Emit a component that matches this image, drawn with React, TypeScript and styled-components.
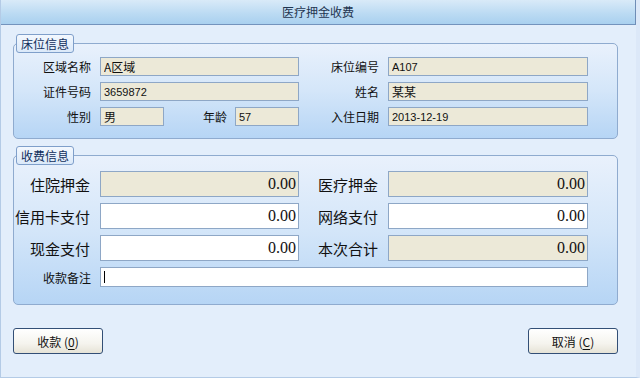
import styled, { createGlobalStyle } from "styled-components";

const GlobalStyle = createGlobalStyle`
  html, body {
    margin: 0;
    padding: 0;
    background: #e3eefb;
  }
  * {
    box-sizing: border-box;
  }
`;

const cjk = `"Noto Sans CJK SC", "Liberation Sans", sans-serif`;

const App = () => {
  return (
    <>
      <GlobalStyle />
      <Window>
        <TitleBar>医疗押金收费</TitleBar>
        <Body>
          <Group>
            <Legend>床位信息</Legend>
            <FormGrid $rows="19px 19px 19px">
              <Label>区域名称</Label>
              <Field $readonly readOnly value="A区域" />
              <Label>床位编号</Label>
              <Field $readonly readOnly value="A107" $latin />
              <Label>证件号码</Label>
              <Field $readonly readOnly value="3659872" $latin />
              <Label>姓名</Label>
              <Field $readonly readOnly value="某某" />
              <Label>性别</Label>
              <SplitCell>
                <Field $readonly readOnly value="男" $width={64} />
                <InlineLabel>年龄</InlineLabel>
                <Field $readonly readOnly value="57" $latin $width={64} />
              </SplitCell>
              <Label>入住日期</Label>
              <Field $readonly readOnly value="2013-12-19" $latin />
            </FormGrid>
          </Group>

          <Group $second>
            <Legend>收费信息</Legend>
            <FormGrid $rows="26px 26px 26px 20px" $second>
              <Label $big>住院押金</Label>
              <Amount $readonly readOnly value="0.00" />
              <Label $big>医疗押金</Label>
              <Amount $readonly readOnly value="0.00" />
              <Label $big>信用卡支付</Label>
              <Amount readOnly value="0.00" />
              <Label $big>网络支付</Label>
              <Amount readOnly value="0.00" />
              <Label $big>现金支付</Label>
              <Amount readOnly value="0.00" />
              <Label $big>本次合计</Label>
              <Amount $readonly readOnly value="0.00" />
              <Label>收款备注</Label>
              <RemarkBox>
                <Caret />
              </RemarkBox>
            </FormGrid>
          </Group>

          <ButtonRow>
            <Button>
              收款 (<u>0</u>)
            </Button>
            <Button>
              取消 (<u>C</u>)
            </Button>
          </ButtonRow>
        </Body>
      </Window>
    </>
  );
};

const Window = styled.div`
  width: 640px;
  height: 378px;
  display: flex;
  flex-direction: column;
  background: #e3eefb;
  border-left: 1px solid #b4cbe6;
  border-right: 4px solid #dce8f8;
  border-bottom: 1px solid #b4cbe6;
  overflow: hidden;
`;

const TitleBar = styled.div`
  height: 25px;
  flex-shrink: 0;
  display: flex;
  align-items: center;
  justify-content: center;
  background: linear-gradient(to bottom, #d9eaf8 0%, #bcdbf3 55%, #a9d0ef 100%);
  border-bottom: 1px solid #7393bd;
  border-right: 1px solid #6f8db6;
  font-family: ${cjk};
  font-size: 12px;
  color: #1f3550;
  padding-bottom: 1px;
`;

const Body = styled.div`
  flex: 1;
  padding: 18px 0 0 12px;
  display: flex;
  flex-direction: column;
`;

const Group = styled.div<{ $second?: boolean }>`
  position: relative;
  width: 605px;
  margin-top: ${(p) => (p.$second ? "16px" : "0")};
  border: 1px solid #8fabcf;
  border-radius: 5px;
  background: linear-gradient(to bottom, #e9f1fc 0%, #d4e6f9 50%, #b6d5f5 100%);
  padding: ${(p) => (p.$second ? "15px 0 17px 0" : "13px 0 12px 0")};
`;

const Legend = styled.div`
  position: absolute;
  top: -10px;
  left: 2px;
  height: 19px;
  padding: 0 4px;
  display: flex;
  align-items: center;
  border: 1px solid #7f9fca;
  border-radius: 3px;
  background: linear-gradient(to bottom, #f3f8fe 0%, #dbe9f9 100%);
  font-family: ${cjk};
  font-size: 12px;
  color: #102f5c;
`;

const FormGrid = styled.div<{ $rows: string; $second?: boolean }>`
  display: grid;
  grid-template-columns: 86px 199px 89px 200px;
  grid-template-rows: ${(p) => p.$rows};
  row-gap: 6px;
`;

const Label = styled.div<{ $big?: boolean }>`
  display: flex;
  align-items: center;
  justify-content: flex-end;
  padding-right: ${(p) => (p.$big ? "10px" : "9px")};
  font-family: ${cjk};
  font-size: ${(p) => (p.$big ? "15px" : "12px")};
  color: #111;
  white-space: nowrap;
`;

const InlineLabel = styled(Label)`
  padding-right: 0;
  margin-left: auto;
  margin-right: 8px;
`;

const SplitCell = styled.div`
  display: flex;
  align-items: stretch;
`;

const Field = styled.input<{ $readonly?: boolean; $latin?: boolean; $width?: number }>`
  width: ${(p) => (p.$width ? `${p.$width}px` : "100%")};
  height: 100%;
  margin: 0;
  padding: 0 3px;
  border: 1px solid #8ea7c6;
  border-radius: 0;
  outline: none;
  background: ${(p) => (p.$readonly ? "#ece9d8" : "#ffffff")};
  font-family: ${(p) => (p.$latin ? `"Liberation Sans", sans-serif` : cjk)};
  font-size: ${(p) => (p.$latin ? "11px" : "12px")};
  color: #111;
`;

const Amount = styled(Field)`
  text-align: right;
  padding-right: 2px;
  font-family: "Liberation Serif", serif;
  font-size: 16px;
`;

const RemarkBox = styled.div`
  grid-column: 2 / span 3;
  position: relative;
  border: 1px solid #8ea7c6;
  background: #ffffff;
`;

const Caret = styled.span`
  position: absolute;
  left: 3px;
  top: 3px;
  width: 1px;
  height: 12px;
  background: #000;
`;

const ButtonRow = styled.div`
  width: 605px;
  margin-top: 23px;
  display: flex;
  justify-content: space-between;
`;

const Button = styled.button`
  width: 90px;
  height: 26px;
  margin: 0;
  padding: 0;
  border: 1px solid #334f76;
  border-radius: 3px;
  background: linear-gradient(to bottom, #ffffff 0%, #f5f4ee 60%, #e6e3d6 100%);
  font-family: ${cjk};
  font-size: 12px;
  color: #111;
  u {
    text-underline-offset: 2px;
  }
`;

export default App;
